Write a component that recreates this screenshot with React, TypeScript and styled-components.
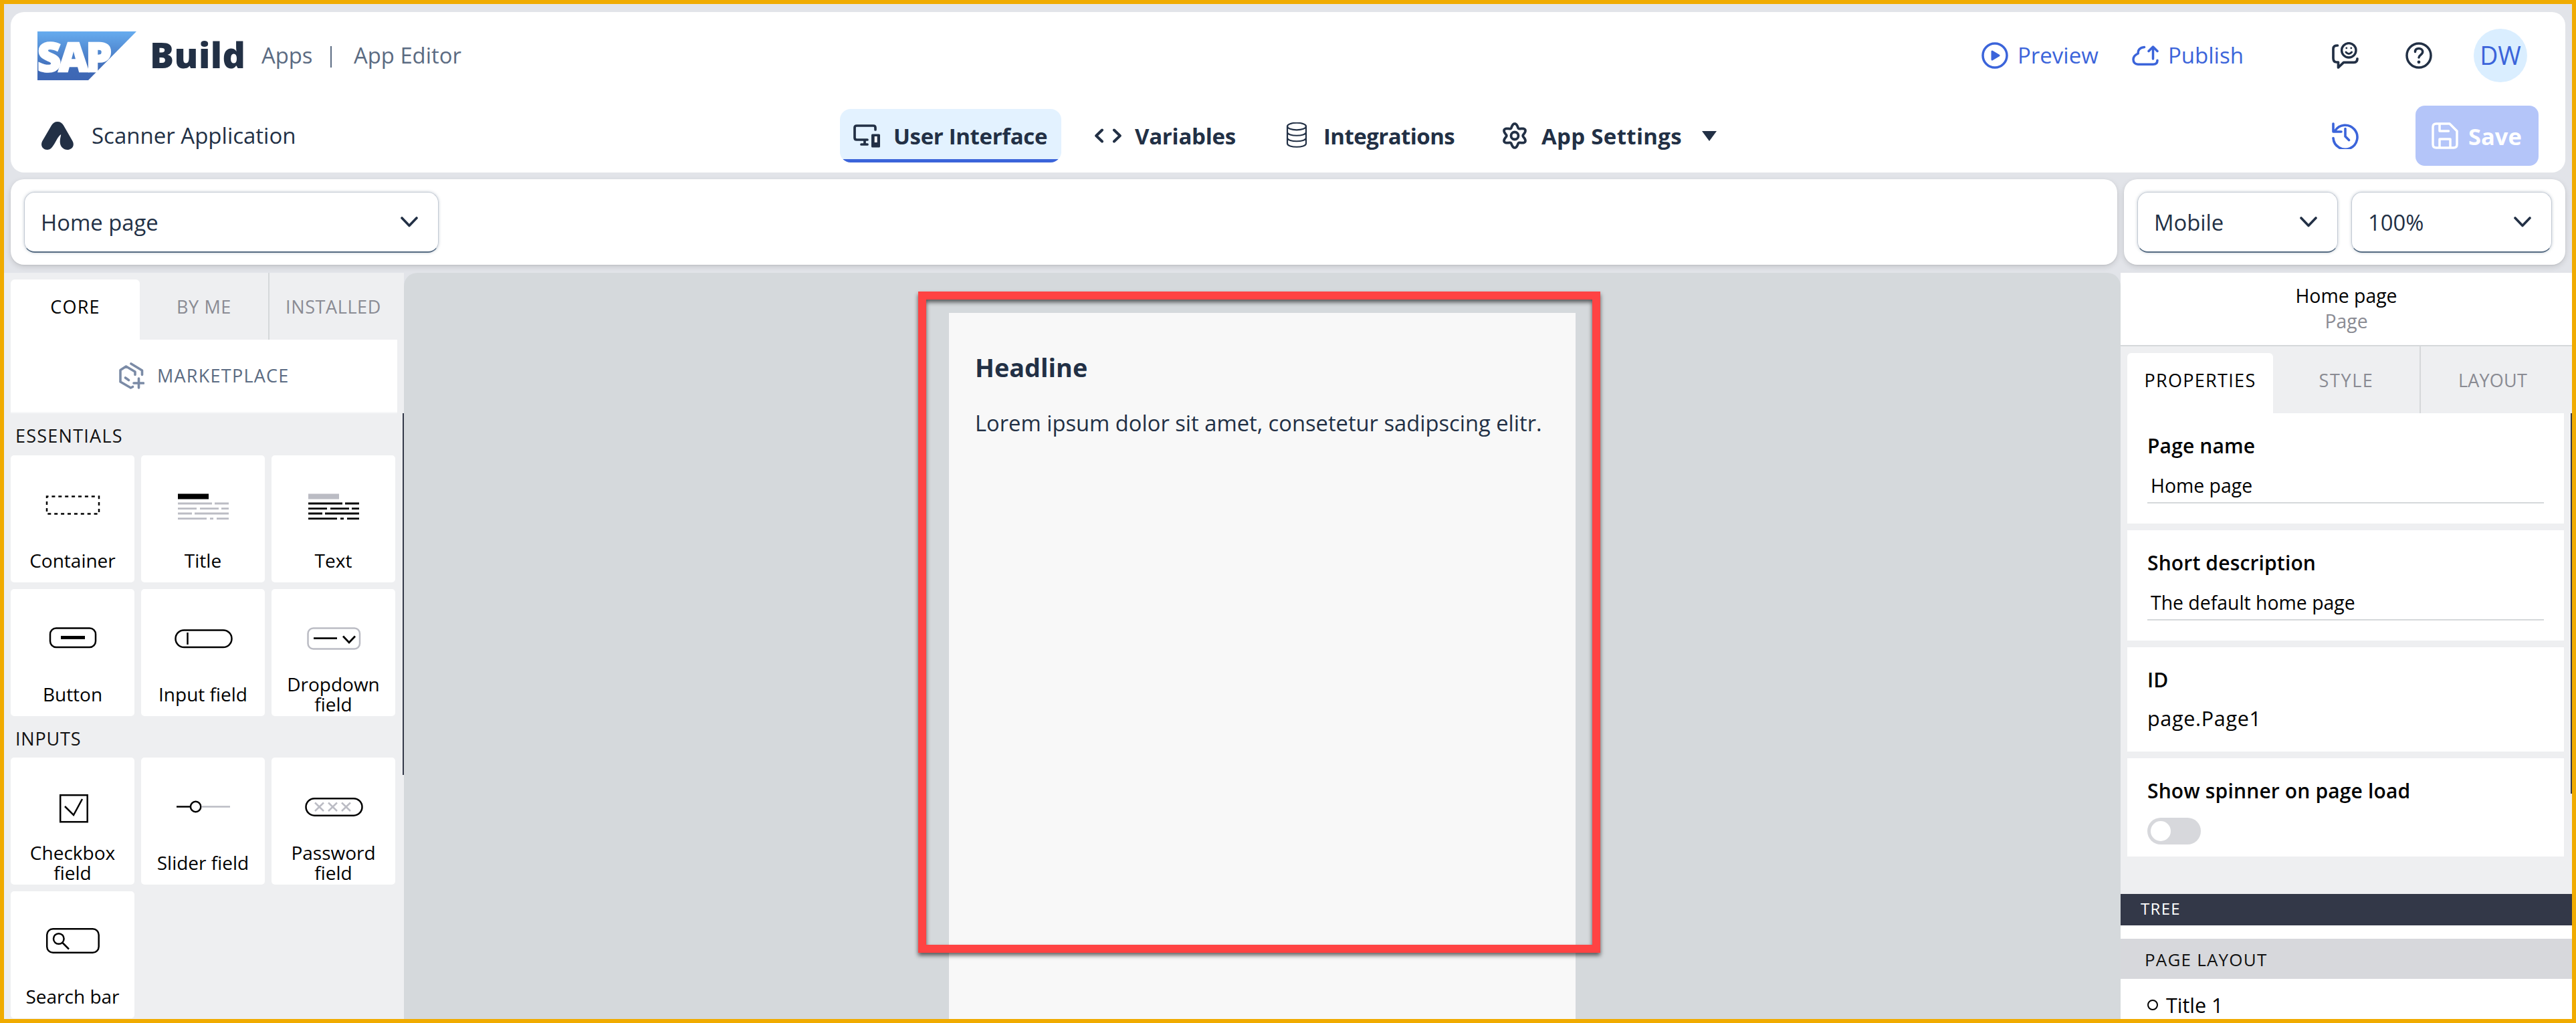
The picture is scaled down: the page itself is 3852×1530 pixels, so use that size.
import React from 'react';
import styled, { createGlobalStyle } from 'styled-components';

const ink = '#223045';
const blue = '#3b64da';
const faint = '#bbbcc4';

const Global = createGlobalStyle`
  * { box-sizing: border-box; }
  body { margin: 0; font-family: 'Open Sans', 'Noto Sans', sans-serif; }
  svg { display: block; flex: none; }
`;

const Frame = styled.div`
  width: 3852px;
  height: 1530px;
  border: 6px solid #f0ab00;
  background: #e2e4e9;
  display: flex;
  flex-direction: column;
  overflow: hidden;
`;

/* ---------- header ---------- */

const Header = styled.header`
  height: 240px;
  flex: none;
  margin: 12px 10px 10px;
  border-radius: 20px;
  background: #fff;
  display: flex;
  flex-direction: column;
`;

const ShellRow = styled.div`
  height: 130px;
  padding: 0 57px 0 40px;
  display: flex;
  align-items: center;
`;

const NavRow = styled.div`
  height: 110px;
  padding: 0 40px 0 46px;
  display: flex;
  align-items: center;
`;

const Logo = styled.svg`
  width: 148px;
  height: 73px;
  overflow: visible;
`;

const Brand = styled.span`
  width: 187px;
  padding: 0 0 3px 20px;
  font-size: 53.5px;
  font-weight: 800;
  letter-spacing: 0.5px;
  line-height: 60px;
  color: ${ink};
`;

const Crumb = styled.span<{ $width: number }>`
  width: ${(p) => p.$width}px;
  font-size: 32.8px;
  line-height: 44px;
  color: #5b6b82;
  white-space: nowrap;
`;

const Divider = styled.span`
  width: 2px;
  height: 32px;
  margin: 4px 33px 0 24px;
  background: #5b6b82;
`;

const Spacer = styled.div`
  flex: 1;
`;

const Action = styled.div<{ $width: number }>`
  width: ${(p) => p.$width}px;
  display: flex;
  align-items: center;
  gap: 14px;
  color: ${blue};
  font-size: 33px;
  line-height: 44px;
`;

const IconSlot = styled.div<{ $right: number; $color: string }>`
  display: flex;
  margin-right: ${(p) => p.$right}px;
  color: ${(p) => p.$color};
`;

const Avatar = styled.div`
  width: 80px;
  height: 80px;
  border-radius: 50%;
  background: #daeeff;
  color: ${blue};
  font-size: 37.4px;
  line-height: 79px;
  text-align: center;
`;

const AppName = styled.div`
  width: 1194px;
  display: flex;
  align-items: center;
  gap: 27px;
  font-size: 33px;
  line-height: 44px;
  color: ${ink};
`;

const Tabs = styled.nav`
  display: flex;
  gap: 30px;
`;

const Tab = styled.div<{ $width: number; $active?: boolean; $track: number }>`
  width: ${(p) => p.$width}px;
  height: 80px;
  padding: 0 20px;
  display: flex;
  align-items: center;
  gap: 20px;
  border-radius: 16px;
  background: ${(p) =>
    p.$active ? `linear-gradient(${blue}, ${blue}) 0 100% / 100% 5px no-repeat #e3f2ff` : 'transparent'};
  color: ${ink};
  font-size: 33px;
  font-weight: 700;
  letter-spacing: ${(p) => p.$track}px;
  white-space: nowrap;
`;

const Caret = styled.span`
  margin-left: 10px;
  border: 11px solid transparent;
  border-top: 15px solid ${ink};
  border-bottom: 0;
`;

const SaveButton = styled.button`
  width: 184px;
  height: 90px;
  border: 0;
  border-radius: 14px;
  padding: 0 0 0 24px;
  background: #b4c5f9;
  color: #fff;
  display: flex;
  align-items: center;
  gap: 15px;
  font: 700 34.5px 'Open Sans', sans-serif;
`;

/* ---------- toolbar ---------- */

const ToolRow = styled.div`
  height: 132px;
  flex: none;
  padding: 0 10px 4px;
  display: flex;
  gap: 10px;
`;

const ToolCard = styled.div<{ $width?: number }>`
  ${(p) => (p.$width ? `width: ${p.$width}px;` : 'flex: 1;')}
  height: 128px;
  border-radius: 20px;
  background: #fff;
  box-shadow: 0 3px 9px rgba(0, 0, 0, 0.13), 0 1px 2px rgba(0, 0, 0, 0.08);
  padding: 19px 20px;
  display: flex;
  gap: 20px;
`;

const Select = styled.div<{ $width: number }>`
  width: ${(p) => p.$width}px;
  height: 91px;
  padding: 0 30px 0 24px;
  border: 1px solid #c3cad4;
  border-bottom: 2px solid #556b82;
  border-radius: 16px;
  box-shadow: 0 0 4px rgba(85, 107, 130, 0.35);
  display: flex;
  align-items: center;
  justify-content: space-between;
  font-size: 32.8px;
  color: ${ink};
`;

/* ---------- body ---------- */

const Body = styled.main`
  margin-top: 8px;
  height: 1116px;
  flex: none;
  display: flex;
`;

const Library = styled.aside`
  width: 598px;
  background: #eeeff1;
  display: flex;
  flex-direction: column;
`;

const TabStrip = styled.div`
  height: 100px;
  flex: none;
  padding: 0 10px;
  display: flex;
  align-items: flex-end;
`;

const PanelTab = styled.div<{ $width: number; $active?: boolean; $line?: boolean; $track?: number }>`
  width: ${(p) => p.$width}px;
  height: ${(p) => (p.$active ? 90 : 100)}px;
  padding-top: 1px;
  padding-bottom: ${(p) => (p.$active ? 10 : 0)}px;
  border-radius: ${(p) => (p.$active ? '6px 6px 0 0' : '0')};
  border-left: ${(p) => (p.$line ? '2px solid #d5d8da' : '0')};
  background: ${(p) => (p.$active ? '#fff' : 'transparent')};
  color: ${(p) => (p.$active ? '#000' : '#8a8b93')};
  display: flex;
  align-items: center;
  justify-content: center;
  font-size: 27px;
  letter-spacing: ${(p) => p.$track ?? 0.6}px;
`;

const Marketplace = styled.div`
  height: 110px;
  flex: none;
  width: 578px;
  margin-left: 10px;
  padding: 0 0 1px 162px;
  background: #fff;
  border-bottom: 2px solid #f7f8f9;
  display: flex;
  align-items: center;
  gap: 19px;
  color: #5b6b82;
  font-size: 27px;
  letter-spacing: 1.25px;
`;

const Scroller = styled.div`
  flex: 1;
  display: flex;
  justify-content: space-between;
  min-height: 0;
  overflow: hidden;
`;

const ScrollThumb = styled.div<{ $height: number }>`
  width: 2px;
  height: ${(p) => p.$height}px;
  background: #333848;
`;

const Groups = styled.div`
  width: 585px;
  padding-left: 10px;
`;

const GroupTitle = styled.div<{ $height: number; $track: number }>`
  height: ${(p) => p.$height}px;
  padding: 4px 0 0 7px;
  display: flex;
  align-items: center;
  font-size: 27px;
  letter-spacing: ${(p) => p.$track}px;
  color: #111;
`;

const Grid = styled.div`
  display: grid;
  grid-template-columns: repeat(3, 185px);
  gap: 10px;
`;

const Tile = styled.div`
  height: 190px;
  border-radius: 5px;
  background: #fff;
`;

const TileLabel = styled.div`
  height: 61px;
  padding: 0 20px;
  display: flex;
  align-items: center;
  justify-content: center;
  text-align: center;
  font-size: 28px;
  line-height: 30px;
  color: #000;
`;

const Canvas = styled.section`
  width: 2567px;
  border-radius: 20px 20px 0 0;
  background: #d5d9dc;
  padding-top: 60px;
  padding-left: 815px;
  position: relative;
`;

const Page = styled.div`
  width: 937px;
  height: 1056px;
  background: #f8f8f8;
  padding: 60px 0 0 39px;
  color: ${ink};
`;

const Headline = styled.h1`
  margin: 0;
  font-size: 37.8px;
  line-height: 44px;
  font-weight: 700;
`;

const Paragraph = styled.p`
  margin: 39px 0 0;
  font-size: 32.7px;
  line-height: 44px;
  white-space: nowrap;
`;

const Highlight = styled.div`
  position: absolute;
  left: 769px;
  top: 28px;
  width: 1020px;
  height: 989px;
  border: 12px solid #ff4343;
  filter: drop-shadow(0 4px 3px rgba(0, 0, 0, 0.6));
`;

const Inspector = styled.aside`
  width: 675px;
  background: #eeeff1;
  display: flex;
  flex-direction: column;
`;

const Subject = styled.div`
  height: 110px;
  flex: none;
  padding-top: 15px;
  border-bottom: 2px solid #d5d8da;
  background: #fff;
  text-align: center;
  font-size: 28.4px;
  line-height: 38px;
  color: #000;
`;

const SubjectKind = styled.div`
  color: #8a8b93;
`;

const Fields = styled.div`
  width: 653px;
  margin-left: 10px;
  display: flex;
  flex-direction: column;
  gap: 10px;
`;

const Field = styled.div<{ $height: number }>`
  height: ${(p) => p.$height}px;
  padding: 28px 30px 0;
  background: #fff;
  color: #000;
`;

const FieldTitle = styled.div`
  font-size: 30px;
  line-height: 41px;
  font-weight: 600;
  margin-bottom: -1px;
  letter-spacing: 0.15px;
`;

const TextInput = styled.div`
  margin-top: 15px;
  height: 52px;
  padding-left: 5px;
  border-bottom: 2px solid #d5d8da;
  font-size: 28.4px;
  line-height: 50px;
`;

const PlainValue = styled.div`
  margin-top: 18px;
  font-size: 30.5px;
  line-height: 40px;
  letter-spacing: 0.7px;
`;

const Toggle = styled.div`
  margin-top: 21px;
  width: 80px;
  height: 40px;
  padding: 5px;
  border-radius: 20px;
  background: #d7d8dc;
`;

const Knob = styled.div`
  width: 30px;
  height: 30px;
  border-radius: 50%;
  background: #fff;
`;

const TreeBar = styled.div`
  height: 47px;
  flex: none;
  padding: 0 0 4px 30px;
  background: #333848;
  color: #fff;
  display: flex;
  align-items: center;
  font-size: 24px;
  font-weight: 500;
  letter-spacing: 1.3px;
`;

const Tree = styled.div`
  height: 140px;
  flex: none;
  padding-top: 20px;
  background: #fff;
  overflow: hidden;
`;

const TreeGroup = styled.div`
  height: 60px;
  padding: 1px 0 0 36px;
  background: #d7d8dc;
  display: flex;
  align-items: center;
  font-size: 26px;
  letter-spacing: 1.2px;
  color: #111;
`;

const TreeItem = styled.div`
  height: 77px;
  padding-left: 40px;
  display: flex;
  align-items: center;
  gap: 12px;
  font-size: 30.5px;
  color: #000;
`;

const Bullet = styled.span`
  width: 16px;
  height: 16px;
  border: 2.6px solid #000;
  border-radius: 50%;
`;

/* ---------- drawings ---------- */

const Glyph = ({ children, w = 3.7 }: { children: React.ReactNode; w?: number }) => (
  <svg width="40" height="40" viewBox="0 0 40 40" fill="none" stroke="currentColor" strokeWidth={w} strokeLinecap="round" strokeLinejoin="round">
    {children}
  </svg>
);

const Chevron = () => (
  <svg width="26" height="16" viewBox="0 0 26 16" fill="none" stroke={ink} strokeWidth="3.6" strokeLinecap="round" strokeLinejoin="round">
    <path d="M2 2l11 11.500L24 2" />
  </svg>
);

const SapLogo = () => (
  <Logo viewBox="0 0 148 73">
    <defs>
      <linearGradient id="sap" x1="0" y1="0" x2="0" y2="1">
        <stop offset="0" stopColor="#66acef" />
        <stop offset="0.800" stopColor="#3e69b6" />
        <stop offset="1" stopColor="#3d66b4" />
      </linearGradient>
    </defs>
    <path d="M0 0h148L76 73H0z" fill="url(#sap)" />
    <text x="0" y="59.500" fill="#fff" stroke="#fff" strokeWidth="2.500" fontFamily="Open Sans" fontWeight="800" fontSize="61" textLength="111" lengthAdjust="spacing">SAP</text>
  </Logo>
);

const AppMark = () => (
  <svg width="48" height="42" viewBox="0 0 48 42" fill={ink}>
    <path d="M24 0c4 0 7 2 9 5.500L46.500 29c4 8-2 13-8 13-5 0-10.500-4-10.800-11.500C27.500 26 29 22 29.200 19 24 22 21 32 16 38c-2.500 3-5 4-7.500 4C3 42-2.500 37 1.300 29L15 5.500C17 2 20 0 24 0z" />
  </svg>
);

const gearPath = (() => {
  const pts: string[] = [];
  for (let a = 0; a < 360; a += 4) {
    const t = (a * Math.PI) / 180;
    const r = 15.1 + 2.9 * Math.cos(6 * (t - Math.PI / 2));
    pts.push(`${(20 + r * Math.cos(t)).toFixed(2)} ${(20 + r * Math.sin(t)).toFixed(2)}`);
  }
  return `M${pts.join('L')}Z`;
})();

const DevicesIcon = () => (
  <Glyph>
    <path d="M33 11V8q0-3-3-3H5Q2 5 2 8v15q0 3 3 3h16M17 27v6M12 33h9" />
    <path d="M28.500 19h10v17h-10z" fill="currentColor" strokeWidth="3" />
    <path d="M31.700 21h4v9h-4z" fill="#fff" stroke="none" />
  </Glyph>
);

const CodeIcon = () => (
  <Glyph w={4}>
    <path d="M11 11.500L2.200 20l8.800 8.500M29 11.500l8.800 8.500-8.800 8.500" />
  </Glyph>
);

const DatabaseIcon = () => (
  <Glyph w={2.2}>
    <ellipse cx="20" cy="6" rx="14" ry="5.300" />
    <path d="M6 6v25.500c0 7 28 7 28 0V6M6 14.500c0 7 28 7 28 0M6 23c0 7 28 7 28 0" />
  </Glyph>
);

const GearIcon = () => (
  <Glyph w={3.8}>
    <path d={gearPath} />
    <circle cx="20" cy="20" r="5.500" />
  </Glyph>
);

const PreviewIcon = () => (
  <Glyph w={3.5}>
    <circle cx="20" cy="20" r="18" />
    <path d="M16 14v12l10-6z" fill="currentColor" strokeWidth="3" />
  </Glyph>
);

const PublishIcon = () => (
  <Glyph w={3.5}>
    <path d="M18.500 7.500C12 8 8.500 12 9.200 17 4.500 19 2 22 2 26c0 4.500 3 7.200 7 7.200h22.500c4.500 0 6.500-2 6.500-6M31.500 25V8M25 13.500L31.500 7l6.500 6.500" />
  </Glyph>
);

const FeedbackIcon = () => (
  <Glyph>
    <path d="M8.500 5C4.500 5 2 6 2 10v14q0 6 5 6h2.500v8l8-7.700H33q5 0 5-5.500" />
    <circle cx="25.300" cy="12.300" r="10.700" strokeWidth="3.400" />
    <path d="M21 15q4.300 5 8.600 0" strokeWidth="3" />
    <path d="M21.800 8.800v.1M28.800 8.800v.1" strokeWidth="2.800" />
  </Glyph>
);

const HelpIcon = () => (
  <Glyph w={3.5}>
    <circle cx="20" cy="20" r="18" />
    <path d="M14.500 14.500c0-3.500 2.500-5 5.500-5s5.700 2 5.700 5c0 4.500-5.700 4.500-5.700 8.500" />
    <circle cx="20" cy="29.800" r="2.400" fill="currentColor" stroke="none" />
  </Glyph>
);

const HistoryIcon = () => (
  <Glyph w={3.6}>
    <path d="M2 2v12h12M4.500 13A18 18 0 1 1 2 23.500M20 9.500V21l5.500 5.500" />
  </Glyph>
);

const SaveIcon = () => (
  <Glyph w={3.5}>
    <path d="M7 2h20l11 11v20q0 5-5 5H7q-5 0-5-5V7q0-5 5-5zM12 2v11h13.500M12 38V25h16v13" />
  </Glyph>
);

const MarketIcon = () => (
  <svg width="38" height="40" viewBox="0 0 38 40" fill="none" stroke="#7b8ba6" strokeWidth="3.600" strokeLinecap="round" strokeLinejoin="round">
    <path d="M24 18.500V14L10.500 6 2 11.500V29l15.500 9 3-1.500M18 2l16.500 10v6.500M9.500 23l5 3.500M29.500 24v14M22 31h14.500" />
  </svg>
);

const Sketch = ({ children, color = '#000' }: { children: React.ReactNode; color?: string }) => (
  <svg width="185" height="126" viewBox="0 0 185 126" fill="none" stroke={color} strokeWidth="2.500">
    {children}
  </svg>
);

const Lines = ({ head, body }: { head: string; body: string }) => (
  <Sketch color={body}>
    <path d="M55 61.500h46" stroke={head} strokeWidth="8" />
    <path strokeWidth="2.800" d="M55 72h51m4 0h21M55 79.600h28m5 0h28m4 0h11M55 87h21m4 0h51M55 94.600h43m5 0h5m5 0h18" />
  </Sketch>
);

const tiles: Record<string, React.ReactNode> = {
  Container: <Sketch><rect x="54" y="61.500" width="78" height="26" strokeDasharray="5 4.900" strokeDashoffset="2.500" /></Sketch>,
  Title: <Lines head="#000" body={faint} />,
  Text: <Lines head={faint} body="#000" />,
  Button: (
    <Sketch>
      <rect x="59" y="58.500" width="68" height="28.500" rx="9" />
      <path d="M75 72.500h36" strokeWidth="5" />
    </Sketch>
  ),
  'Input field': (
    <Sketch>
      <rect x="51.500" y="61.500" width="84" height="25.500" rx="12.700" />
      <path d="M69.500 65v18" />
    </Sketch>
  ),
  'Dropdown field': (
    <Sketch>
      <rect x="54.500" y="58.500" width="77.500" height="31" rx="8" stroke={faint} />
      <path d="M63 73.700h35M107 70.500l9 9.500 9-9.500" strokeWidth="2.800" />
    </Sketch>
  ),
  'Checkbox field': (
    <Sketch>
      <rect x="74.200" y="56.200" width="40.500" height="40" />
      <path d="M81 73l13 13 13-24" />
    </Sketch>
  ),
  'Slider field': (
    <Sketch>
      <path d="M53 73.500h21" />
      <circle cx="81.600" cy="73.500" r="7.700" />
      <path d="M90.500 73.500H133" stroke={faint} />
    </Sketch>
  ),
  'Password field': (
    <Sketch>
      <rect x="51.500" y="61.200" width="84" height="25.500" rx="12.700" />
      {[71.5, 91.5, 111.5].map((x) => (
        <path key={x} d={`M${x - 6.5} 67.500l13 12.500m0-12.500l-13 12.500`} stroke={faint} />
      ))}
    </Sketch>
  ),
  'Search bar': (
    <Sketch>
      <rect x="54.200" y="56.200" width="77.500" height="35.500" rx="9" />
      <circle cx="71.800" cy="71" r="7.800" />
      <path d="M77.500 77l9.500 9.500" />
    </Sketch>
  ),
};

const TileCard = ({ name }: { name: string }) => (
  <Tile>
    {tiles[name]}
    <TileLabel>{name}</TileLabel>
  </Tile>
);

const essentials = ['Container', 'Title', 'Text', 'Button', 'Input field', 'Dropdown field'];
const inputs = ['Checkbox field', 'Slider field', 'Password field', 'Search bar'];

export default function App() {
  return (
    <Frame>
      <Global />
      <Header>
        <ShellRow>
          <SapLogo />
          <Brand>Build</Brand>
          <Crumb $width={79}>Apps</Crumb>
          <Divider />
          <Crumb $width={170}>App Editor</Crumb>
          <Spacer />
          <Action $width={225}><PreviewIcon />Preview</Action>
          <Action $width={299}><PublishIcon />Publish</Action>
          <IconSlot $right={70} $color={ink}><FeedbackIcon /></IconSlot>
          <IconSlot $right={62} $color={ink}><HelpIcon /></IconSlot>
          <Avatar>DW</Avatar>
        </ShellRow>
        <NavRow>
          <AppName><AppMark />Scanner Application</AppName>
          <Tabs>
            <Tab $width={331} $active $track={-0.35}><DevicesIcon />User Interface</Tab>
            <Tab $width={252} $track={-0.26}><CodeIcon />Variables</Tab>
            <Tab $width={296} $track={-0.56}><DatabaseIcon />Integrations</Tab>
            <Tab $width={361} $track={0.31}><GearIcon />App Settings<Caret /></Tab>
          </Tabs>
          <Spacer />
          <IconSlot $right={85} $color={blue}><HistoryIcon /></IconSlot>
          <SaveButton><SaveIcon />Save</SaveButton>
        </NavRow>
      </Header>

      <ToolRow>
        <ToolCard>
          <Select $width={620}>Home page<Chevron /></Select>
        </ToolCard>
        <ToolCard $width={660}>
          <Select $width={300}>Mobile<Chevron /></Select>
          <Select $width={300}>100%<Chevron /></Select>
        </ToolCard>
      </ToolRow>

      <Body>
        <Library>
          <TabStrip>
            <PanelTab $width={193} $active $track={1.2}>CORE</PanelTab>
            <PanelTab $width={192}>BY ME</PanelTab>
            <PanelTab $width={193} $line>INSTALLED</PanelTab>
          </TabStrip>
          <Marketplace><MarketIcon />MARKETPLACE</Marketplace>
          <Scroller>
            <Groups>
              <GroupTitle $height={63} $track={1.25}>ESSENTIALS</GroupTitle>
              <Grid>{essentials.map((n) => <TileCard key={n} name={n} />)}</Grid>
              <GroupTitle $height={62} $track={0.8}>INPUTS</GroupTitle>
              <Grid>{inputs.map((n) => <TileCard key={n} name={n} />)}</Grid>
            </Groups>
            <ScrollThumb $height={541} />
          </Scroller>
        </Library>

        <Canvas>
          <Page>
            <Headline>Headline</Headline>
            <Paragraph>Lorem ipsum dolor sit amet, consetetur sadipscing elitr.</Paragraph>
          </Page>
          <Highlight />
        </Canvas>

        <Inspector>
          <Subject>
            Home page
            <SubjectKind>Page</SubjectKind>
          </Subject>
          <TabStrip>
            <PanelTab $width={218} $active $track={1.3}>PROPERTIES</PanelTab>
            <PanelTab $width={219} $track={1.6}>STYLE</PanelTab>
            <PanelTab $width={217} $line $track={0.2}>LAYOUT</PanelTab>
          </TabStrip>
          <Scroller>
            <Fields>
              <Field $height={165}>
                <FieldTitle>Page name</FieldTitle>
                <TextInput>Home page</TextInput>
              </Field>
              <Field $height={165}>
                <FieldTitle>Short description</FieldTitle>
                <TextInput>The default home page</TextInput>
              </Field>
              <Field $height={156}>
                <FieldTitle>ID</FieldTitle>
                <PlainValue>page.Page1</PlainValue>
              </Field>
              <Field $height={147}>
                <FieldTitle>Show spinner on page load</FieldTitle>
                <Toggle><Knob /></Toggle>
              </Field>
            </Fields>
            <ScrollThumb $height={569} />
          </Scroller>
          <TreeBar>TREE</TreeBar>
          <Tree>
            <TreeGroup>PAGE LAYOUT</TreeGroup>
            <TreeItem><Bullet />Title 1</TreeItem>
          </Tree>
        </Inspector>
      </Body>
    </Frame>
  );
}
